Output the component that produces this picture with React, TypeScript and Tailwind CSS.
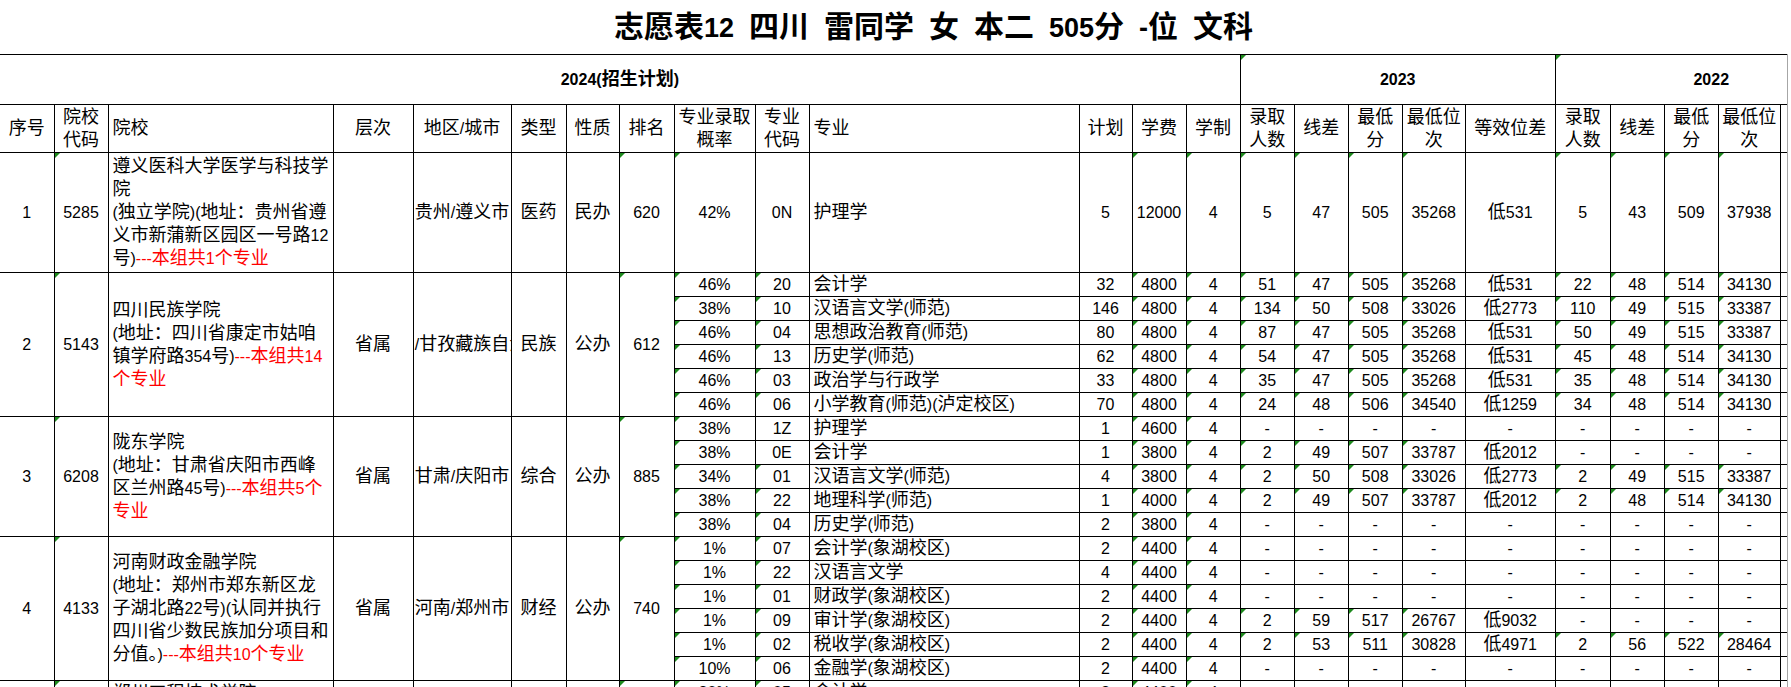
import React from 'react'

type Line = [string, string?]
type Major = { p: string; c: string; n: string; plan: string; fee: string; a: string[]; b: string[] }
type Group = {
  no: string
  code: string
  lines: Line[]
  level: string
  area: string
  kind: string
  prop: string
  rank: string
  rowH: string
  majors: Major[]
}

const m = (p: string, c: string, n: string, plan: string, fee: string, a: string, b: string): Major => ({
  p, c, n, plan, fee, a: a.split(' '), b: b.split(' '),
})
const NO5 = '- - - - -'
const NO4 = '- - - -'

const groups: Group[] = [
  {
    no: '1', code: '5285', level: '', area: '贵州/遵义市', kind: '医药', prop: '民办', rank: '620', rowH: 'h-[120px]',
    lines: [['遵义医科大学医学与科技学'], ['院'], ['(独立学院)(地址：贵州省遵'], ['义市新蒲新区园区一号路12'], ['号)', '---本组共1个专业']],
    majors: [m('42%', '0N', '护理学', '5', '12000', '5 47 505 35268 低531', '5 43 509 37938')],
  },
  {
    no: '2', code: '5143', level: '省属', area: '四川/甘孜藏族自治州', kind: '民族', prop: '公办', rank: '612', rowH: 'h-[24px]',
    lines: [['四川民族学院'], ['(地址：四川省康定市姑咱'], ['镇学府路354号)', '---本组共14'], ['', '个专业']],
    majors: [
      m('46%', '20', '会计学', '32', '4800', '51 47 505 35268 低531', '22 48 514 34130'),
      m('38%', '10', '汉语言文学(师范)', '146', '4800', '134 50 508 33026 低2773', '110 49 515 33387'),
      m('46%', '04', '思想政治教育(师范)', '80', '4800', '87 47 505 35268 低531', '50 49 515 33387'),
      m('46%', '13', '历史学(师范)', '62', '4800', '54 47 505 35268 低531', '45 48 514 34130'),
      m('46%', '03', '政治学与行政学', '33', '4800', '35 47 505 35268 低531', '35 48 514 34130'),
      m('46%', '06', '小学教育(师范)(泸定校区)', '70', '4800', '24 48 506 34540 低1259', '34 48 514 34130'),
    ],
  },
  {
    no: '3', code: '6208', level: '省属', area: '甘肃/庆阳市', kind: '综合', prop: '公办', rank: '885', rowH: 'h-[24px]',
    lines: [['陇东学院'], ['(地址：甘肃省庆阳市西峰'], ['区兰州路45号)', '---本组共5个'], ['', '专业']],
    majors: [
      m('38%', '1Z', '护理学', '1', '4600', NO5, NO4),
      m('38%', '0E', '会计学', '1', '3800', '2 49 507 33787 低2012', NO4),
      m('34%', '01', '汉语言文学(师范)', '4', '3800', '2 50 508 33026 低2773', '2 49 515 33387'),
      m('38%', '22', '地理科学(师范)', '1', '4000', '2 49 507 33787 低2012', '2 48 514 34130'),
      m('38%', '04', '历史学(师范)', '2', '3800', NO5, NO4),
    ],
  },
  {
    no: '4', code: '4133', level: '省属', area: '河南/郑州市', kind: '财经', prop: '公办', rank: '740', rowH: 'h-[24px]',
    lines: [
      ['河南财政金融学院'],
      ['(地址：郑州市郑东新区龙'],
      ['子湖北路22号)(认同并执行'],
      ['四川省少数民族加分项目和'],
      ['分值。)', '---本组共10个专业'],
    ],
    majors: [
      m('1%', '07', '会计学(象湖校区)', '2', '4400', NO5, NO4),
      m('1%', '22', '汉语言文学', '4', '4400', NO5, NO4),
      m('1%', '01', '财政学(象湖校区)', '2', '4400', NO5, NO4),
      m('1%', '09', '审计学(象湖校区)', '2', '4400', '2 59 517 26767 低9032', NO4),
      m('1%', '02', '税收学(象湖校区)', '2', '4400', '2 53 511 30828 低4971', '2 56 522 28464'),
      m('10%', '06', '金融学(象湖校区)', '2', '4400', NO5, NO4),
    ],
  },
  {
    no: '5', code: '4150', level: '省属', area: '河南/郑州市', kind: '理工', prop: '公办', rank: '760', rowH: 'h-[24px]',
    lines: [['郑州工程技术学院'], ['(地址：郑州市中原区)']],
    majors: [
      m('20%', '05', '会计学', '2', '4400', NO5, NO4),
      m('20%', '06', '财务管理', '2', '4400', NO5, NO4),
    ],
  },
]

const heads: { t: string[]; left?: boolean }[] = [
  { t: ['序号'] }, { t: ['院校', '代码'] }, { t: ['院校'], left: true }, { t: ['层次'] }, { t: ['地区/城市'] },
  { t: ['类型'] }, { t: ['性质'] }, { t: ['排名'] }, { t: ['专业录取', '概率'] }, { t: ['专业', '代码'] },
  { t: ['专业'], left: true }, { t: ['计划'] }, { t: ['学费'] }, { t: ['学制'] }, { t: ['录取', '人数'] },
  { t: ['线差'] }, { t: ['最低', '分'] }, { t: ['最低位', '次'] }, { t: ['等效位差'] }, { t: ['录取', '人数'] },
  { t: ['线差'] }, { t: ['最低', '分'] }, { t: ['最低位', '次'] }, { t: [''] },
]

const widths = [
  'w-[54px]', 'w-[54px]', 'w-[225px]', 'w-[80px]', 'w-[98px]', 'w-[55px]', 'w-[53px]', 'w-[55px]',
  'w-[81px]', 'w-[54px]', 'w-[270px]', 'w-[53px]', 'w-[54px]', 'w-[54px]', 'w-[54px]', 'w-[54px]',
  'w-[54px]', 'w-[63px]', 'w-[90px]', 'w-[55px]', 'w-[54px]', 'w-[54px]', 'w-[62px]', 'w-[87px]',
]

const isNum = (s: string) => /^\d+%?$/.test(s)

// ascii runs are set smaller so the digits keep Calibri-like widths next to the CJK glyphs
function Mixed({ text, cjk = 'text-[18px]', latin = 'text-[16px]' }: { text: string; cjk?: string; latin?: string }) {
  const parts = text.split(/([\x20-\x7E]+)/).filter(Boolean)
  return (
    <>
      {parts.map((p, i) =>
        /^[\x20-\x7E]+$/.test(p) ? (
          <span key={i} className={latin}>{p}</span>
        ) : (
          <span key={i} className={cjk}>{p}</span>
        )
      )}
    </>
  )
}

function Tri() {
  return (
    <span className="absolute left-0 top-0 h-0 w-0 border-t-[5px] border-r-[5px] border-t-[#1d8a1d] border-r-transparent" />
  )
}

function Td({
  children, tri, left, rs, cs, first, h,
}: {
  children?: React.ReactNode
  tri?: boolean
  left?: boolean
  rs?: number
  cs?: number
  first?: boolean
  h?: string
}) {
  return (
    <td
      rowSpan={rs}
      colSpan={cs}
      className={`relative border border-black p-0 align-middle ${first ? 'border-l-0' : ''} ${h ?? ''}`}
    >
      {tri && <Tri />}
      {left ? (
        <div className="overflow-hidden whitespace-nowrap pl-[4px] leading-[22px]">{children}</div>
      ) : (
        <div className="flex justify-center overflow-hidden whitespace-nowrap leading-[22px]">
          <span className="shrink-0">{children}</span>
        </div>
      )}
    </td>
  )
}

const title = ['志愿表12', '四川', '雷同学', '女', '本二', '505分', '-位', '文科']

export default function App() {
  return (
    <div className="w-[1791px] h-[687px] overflow-hidden bg-white text-black [font-family:'Liberation_Sans','Noto_Sans_CJK_SC',sans-serif]">
      <div className="flex h-[54px] w-[1867px] items-center justify-center gap-[15px] font-bold">
        {title.map(t => (
          <span key={t} className="whitespace-nowrap leading-none">
            <Mixed text={t} cjk="text-[30px]" latin="text-[27px]" />
          </span>
        ))}
      </div>

      <div className="w-[1788px] overflow-hidden border-r border-[#a6a6a6]">
        <table className="w-[1867px] table-fixed border-collapse">
          <colgroup>
            {widths.map((w, i) => (
              <col key={i} className={w} />
            ))}
          </colgroup>
          <thead>
            <tr>
              <Td cs={14} first h="h-[50px]">
                <span className="font-bold"><Mixed text="2024(招生计划)" /></span>
              </Td>
              <Td cs={5} tri>
                <span className="font-bold"><Mixed text="2023" /></span>
              </Td>
              <Td cs={5} tri>
                <span className="font-bold"><Mixed text="2022" /></span>
              </Td>
            </tr>
            <tr>
              {heads.map((hd, i) => (
                <td
                  key={i}
                  className={`border border-black p-0 align-middle h-[48px] font-normal ${i === 0 ? 'border-l-0' : ''}`}
                >
                  {hd.left ? (
                    <div className="pl-[4px] leading-[23px]"><Mixed text={hd.t[0]} /></div>
                  ) : (
                    <div className="flex flex-col items-center whitespace-nowrap leading-[23px]">
                      {hd.t.map((l, j) => (
                        <div key={j}><Mixed text={l} /></div>
                      ))}
                    </div>
                  )}
                </td>
              ))}
            </tr>
          </thead>
          <tbody>
            {groups.map(g =>
              g.majors.map((mj, i) => (
                <tr key={g.no + '-' + i}>
                  {i === 0 && (
                    <>
                      <Td rs={g.majors.length} first><Mixed text={g.no} /></Td>
                      <Td rs={g.majors.length} tri><Mixed text={g.code} /></Td>
                      <td rowSpan={g.majors.length} className="border border-black p-0 align-middle">
                        <div className="overflow-hidden whitespace-nowrap pl-[4px] leading-[22px]">
                          {g.lines.map((ln, j) => (
                            <div key={j}>
                              {ln[0] && <Mixed text={ln[0]} />}
                              {ln[1] && (
                                <span className="text-[#ff0000]"><Mixed text={ln[1]} /></span>
                              )}
                            </div>
                          ))}
                        </div>
                      </td>
                      <Td rs={g.majors.length}><Mixed text={g.level} /></Td>
                      <Td rs={g.majors.length}><Mixed text={g.area} /></Td>
                      <Td rs={g.majors.length}><Mixed text={g.kind} /></Td>
                      <Td rs={g.majors.length}><Mixed text={g.prop} /></Td>
                      <Td rs={g.majors.length} tri><Mixed text={g.rank} /></Td>
                    </>
                  )}
                  <Td tri h={g.rowH}><Mixed text={mj.p} /></Td>
                  <Td tri={isNum(mj.c)}><Mixed text={mj.c} /></Td>
                  <Td left><Mixed text={mj.n} /></Td>
                  <Td><Mixed text={mj.plan} /></Td>
                  <Td tri><Mixed text={mj.fee} /></Td>
                  <Td tri><Mixed text="4" /></Td>
                  {mj.a.map((v, k) => (
                    <Td key={'a' + k} tri={k < 4 && isNum(v)}><Mixed text={v} /></Td>
                  ))}
                  {mj.b.map((v, k) => (
                    <Td key={'b' + k} tri={isNum(v)}><Mixed text={v} /></Td>
                  ))}
                  <Td />
                </tr>
              ))
            )}
          </tbody>
        </table>
      </div>
    </div>
  )
}
